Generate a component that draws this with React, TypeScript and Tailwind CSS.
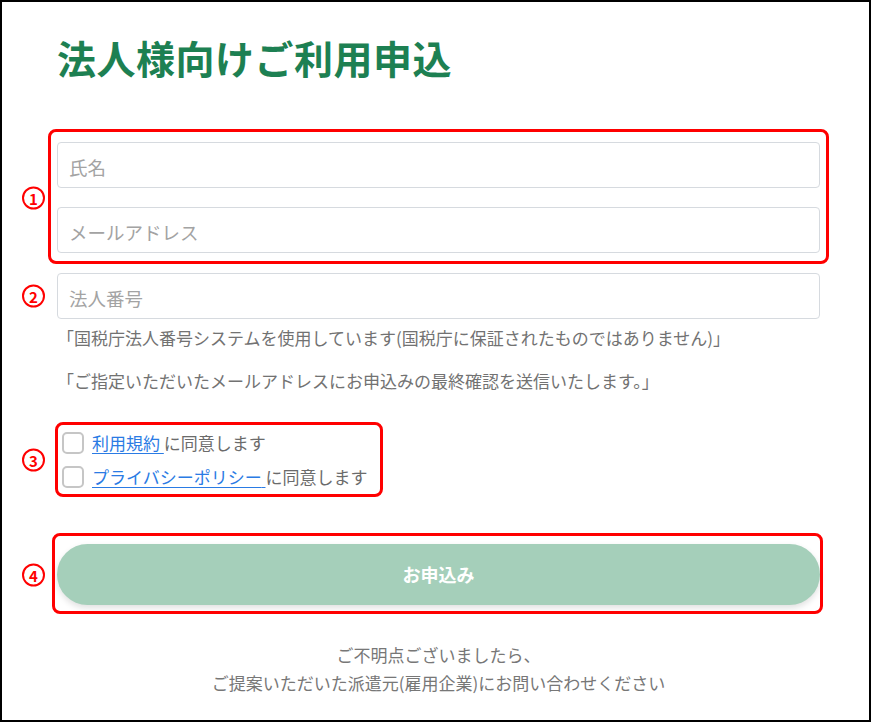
import React from "react";

const font = { fontFamily: '"Noto Sans CJK JP", "Noto Sans", sans-serif' };

function Circle({ n }: { n: string }) {
  return (
    <div className="absolute left-[-35px] top-1/2 -translate-y-1/2 w-[23px] h-[23px] rounded-full border-[2.5px] border-[#ff0000] flex items-center justify-center text-[#ff0000] text-[15px] font-bold leading-none">
      {n}
    </div>
  );
}

function Field({ placeholder }: { placeholder: string }) {
  return (
    <input
      readOnly
      placeholder={placeholder}
      className="block w-full h-[46px] border border-[#d6dadf] rounded-[4px] pl-[11px] pt-[4px] text-[18.5px] bg-white outline-none placeholder:text-[#a3a3a3]"
      style={font}
    />
  );
}

function Check({ link }: { link: string }) {
  return (
    <div className="flex items-center gap-[8px] h-[22px]">
      <span className="w-[22px] h-[22px] rounded-[5px] border-2 border-[#c6c6c6] bg-white shrink-0" />
      <span className="text-[17px] leading-[22px] text-[#6b6b6b]">
        <span className="text-[#2a7be4] underline underline-offset-[3px]">{link} </span>
        に同意します
      </span>
    </div>
  );
}

export default function App() {
  return (
    <div
      className="w-[871px] h-[722px] border-2 border-black bg-white overflow-hidden pl-[55px] pr-[49px] pt-[32px] flex flex-col"
      style={font}
    >
      <h1 className="text-[39px] leading-[47px] font-bold text-[#1d8052] tracking-[0.5px]">
        法人様向けご利用申込
      </h1>

      <div className="relative mt-[61px] flex flex-col gap-[19px]">
        <div className="absolute -left-[9px] -right-[9px] -top-[13px] -bottom-[11px] border-[3px] border-[#ff0000] rounded-[8px] pointer-events-none" />
        <Circle n="1" />
        <Field placeholder="氏名" />
        <Field placeholder="メールアドレス" />
      </div>

      <div className="relative mt-[20px]">
        <Circle n="2" />
        <Field placeholder="法人番号" />
      </div>

      <div className="mt-[7px] flex flex-col gap-[19px] text-[17px] leading-[24px] text-[#727272]">
        <p>「国税庁法人番号システムを使用しています(国税庁に保証されたものではありません)」</p>
        <p>「ご指定いただいたメールアドレスにお申込みの最終確認を送信いたします。」</p>
      </div>

      <div className="relative mt-[39px] pl-[5px] flex flex-col gap-[12px]">
        <div className="absolute -left-[2px] w-[328px] -top-[10px] -bottom-[9px] border-[3px] border-[#ff0000] rounded-[8px] pointer-events-none" />
        <Circle n="3" />
        <Check link="利用規約" />
        <Check link="プライバシーポリシー" />
      </div>

      <div className="relative mt-[56px]">
        <div className="absolute -left-[5px] -right-[3px] -top-[11px] -bottom-[9px] border-[3px] border-[#ff0000] rounded-[8px] pointer-events-none" />
        <Circle n="4" />
        <button
          className="w-full h-[61px] rounded-full bg-[#a5cfba] text-white text-[18px] font-bold shadow-[0_3px_6px_rgba(0,0,0,0.12)]"
          style={font}
        >
          お申込み
        </button>
      </div>

      <div className="mt-[36px] text-center text-[17px] leading-[28px] text-[#777777]">
        <p>ご不明点ございましたら、</p>
        <p>ご提案いただいた派遣元(雇用企業)にお問い合わせください</p>
      </div>
    </div>
  );
}
